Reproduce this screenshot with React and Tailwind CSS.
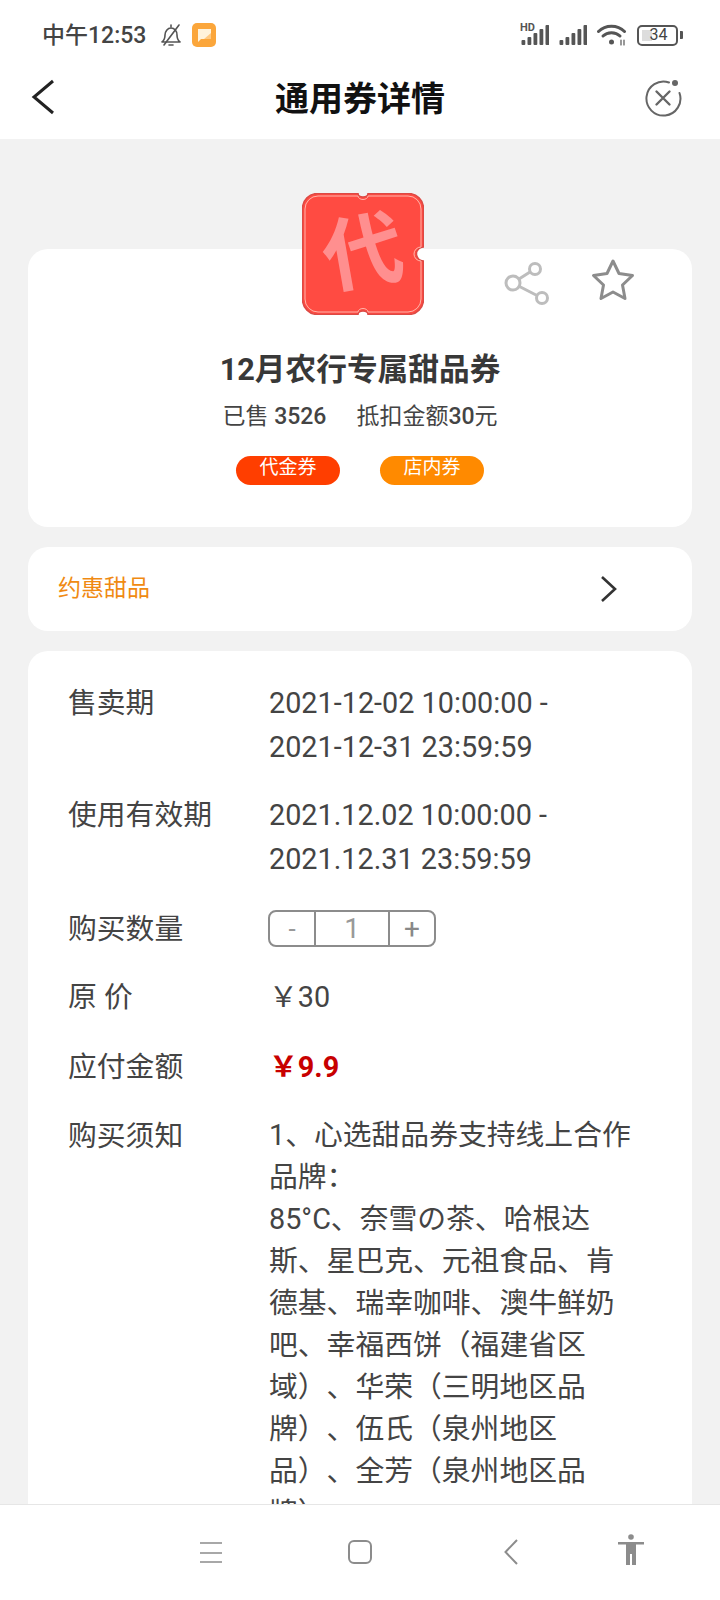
const font = { fontFamily: '"Roboto","Noto Sans CJK SC",sans-serif' };

function Signal() {
  const hs = [5, 8, 12, 16, 20];
  return (
    <svg width="28" height="20" viewBox="0 0 28 20" className="block">
      {hs.map((h, i) => (
        <rect key={i} x={i * 6 + 0.5} y={20 - h} width="3.8" height={h} rx="1" fill="#555" />
      ))}
    </svg>
  );
}

function StatusBar() {
  return (
    <div className="flex items-center h-[70px] pl-[42px] pr-[37px] bg-white text-[#444]">
      <span className="text-[23px] font-medium leading-none mr-[14px]">中午12:53</span>
      <svg width="22" height="24" viewBox="0 0 22 24" fill="none" stroke="#555" strokeWidth="1.600" strokeLinecap="round" strokeLinejoin="round">
        <path d="M2 19c2-1.500 3-3.500 3-7s2.500-7 6-7 6 3 6 7c0 3.500 1 5.500 3 7z" />
        <path d="M9 22h4" />
        <path d="M11 2v2" />
        <path d="M4 22L19 2" />
      </svg>
      <div className="ml-[10px] w-[24px] h-[24px] rounded-[5px] bg-[#fba63b] flex items-center justify-center">
        <svg width="15" height="14" viewBox="0 0 15 14">
          <path d="M1 1h13v10H4l-3 3z" fill="#fff3dc" />
          <path d="M7 11l7-6v6z" fill="#ffc982" />
        </svg>
      </div>
      <div className="ml-auto flex items-center">
        <div className="relative w-[28px] h-[20px]">
          <Signal />
          <span className="absolute left-[-1px] top-[-3px] text-[11px] leading-none font-bold text-[#555] bg-white pr-[1px]">HD</span>
        </div>
        <div className="ml-[10px]"><Signal /></div>
        <svg className="ml-[10px]" width="30" height="22" viewBox="0 0 30 22" fill="none" stroke="#555" strokeWidth="3" strokeLinecap="round">
          <path d="M1.500 7.500C8.500 .5 20.500 .5 27.500 7.500" />
          <path d="M6 12c4.500-4.500 12.500-4.500 17 0" />
          <circle cx="14.500" cy="18" r="2.500" fill="#555" stroke="none" />
          <path d="M24 16v5M27 16v5" strokeWidth="1.200" />
        </svg>
        <div className="ml-[10px] relative w-[41px] h-[21px] rounded-[5px] border-2 border-[#555] flex items-center justify-center">
          <div className="absolute left-[3px] top-[3px] bottom-[3px] w-[10px] bg-[#ddd]" />
          <span className="relative text-[16px] leading-none text-[#444] pl-[2px]">34</span>
        </div>
        <div className="ml-[2px] w-[3px] h-[8px] rounded-r-[1px] bg-[#555]" />
      </div>
    </div>
  );
}

function Header() {
  return (
    <div className="relative flex items-center justify-center h-[69px] bg-white">
      <svg className="absolute left-[30px] top-[9px]" width="26" height="36" viewBox="0 0 26 36" fill="none" stroke="#222" strokeWidth="3">
        <path d="M23 2L4 18l19 16" />
      </svg>
      <span className="text-[34px] font-bold text-[#111] leading-none -mt-[12px]">通用券详情</span>
      <svg className="absolute left-[643px] top-[7px]" width="40" height="40" viewBox="0 0 40 40" fill="none" stroke="#666" strokeWidth="2">
        <path d="M26 5.500A17 17 0 1 0 36.500 16" strokeLinecap="round" />
        <path d="M13.500 14.500l13 13M26.500 14.500l-13 13" strokeWidth="2.400" strokeLinecap="round" />
        <circle cx="32" cy="6" r="3" fill="#666" stroke="none" />
      </svg>
    </div>
  );
}

function Ticket() {
  const d = (o, r) => {
    const a = o, b = 122 - o;
    return `M${a + r} ${a}H${56}a5 3.500 0 0 0 10 0H${b - r}a${r} ${r} 0 0 1 ${r} ${r}V${54}a7 7 0 0 0 0 14V${b - r}a${r} ${r} 0 0 1 -${r} ${r}H${66}a5 3.500 0 0 0 -10 0H${a + r}a${r} ${r} 0 0 1 -${r} -${r}V${a + r}a${r} ${r} 0 0 1 ${r} -${r}z`;
  };
  return (
    <div className="relative w-[122px] h-[122px]">
      <svg className="absolute inset-0" width="122" height="122" viewBox="0 0 122 122">
        <path d={d(0.5, 15)} fill="#ff4b42" stroke="#dc4a45" strokeWidth="1.500" />
        <path d={d(3, 13)} fill="none" stroke="#ffb6ab" strokeWidth="1" />
      </svg>
      <span className="absolute inset-0 flex items-center justify-center text-[80px] font-bold leading-none text-[#ff8f8f] -rotate-[10deg]">代</span>
    </div>
  );
}

function Row({ label, children, className }) {
  return (
    <div className={`flex text-[28.800px] leading-[44px] text-[#444] ${className || ""}`}>
      <div className="w-[201px] shrink-0">{label}</div>
      <div className="flex-1">{children}</div>
    </div>
  );
}

function Stepper() {
  return (
    <div className="mt-[3px] -ml-[1px] flex w-[168px] h-[37px] rounded-[8px] border-2 border-[#8c8c8c] text-[#999] leading-none">
      <div className="w-[44px] flex items-center justify-center text-[26px]">-</div>
      <div className="w-[76px] flex items-center justify-center text-[28px] border-x-2 border-[#8c8c8c]">1</div>
      <div className="flex-1 flex items-center justify-center text-[28px] text-[#888]">+</div>
    </div>
  );
}

function BottomNav() {
  return (
    <div className="relative shrink-0 h-[96px] bg-white border-t border-[#e6e6e6]">
      <svg className="absolute left-[199px] top-[36px]" width="24" height="24" viewBox="0 0 24 24" stroke="#8c8c8c" strokeWidth="1.600">
        <path d="M1 2h22M1 12h22M1 21h22" />
      </svg>
      <svg className="absolute left-[347px] top-[34px]" width="26" height="26" viewBox="0 0 26 26" fill="none" stroke="#8c8c8c" strokeWidth="2">
        <rect x="2" y="2" width="22" height="22" rx="5" />
      </svg>
      <svg className="absolute left-[503px] top-[34px]" width="16" height="26" viewBox="0 0 16 26" fill="none" stroke="#8c8c8c" strokeWidth="2">
        <path d="M14 1L2.500 13 14 25" />
      </svg>
      <svg className="absolute left-[617px] top-[29px]" width="28" height="31" viewBox="0 0 28 31" fill="#8c8c8c">
        <circle cx="14" cy="3" r="2.800" />
        <path d="M1 8h26v2.500H19V31h-4V20h-2v11H9V10.500H1z" />
      </svg>
    </div>
  );
}

const notes = [
  "1、心选甜品券支持线上合作",
  "品牌：",
  "85°C、奈雪の茶、哈根达",
  "斯、星巴克、元祖食品、肯",
  "德基、瑞幸咖啡、澳牛鲜奶",
  "吧、幸福西饼（福建省区",
  "域）、华荣（三明地区品",
  "牌）、伍氏（泉州地区",
  "品）、全芳（泉州地区品",
  "牌）",
];

export default function App() {
  return (
    <div className="w-[720px] h-[1600px] flex flex-col overflow-hidden bg-[#f2f2f2]" style={font}>
      <StatusBar />
      <Header />
      <div className="flex-1 min-h-0 overflow-hidden px-[28px]">
        <div className="relative z-10 flex justify-center pt-[54px] -mb-[66px] pl-[6px]">
          <Ticket />
        </div>
        <div className="relative bg-white rounded-[20px] h-[278px] flex flex-col items-center">
          <svg className="absolute left-[473px] top-[10px]" width="50" height="50" viewBox="0 0 50 50" fill="none" stroke="#bdbdbd" strokeWidth="3">
            <circle cx="34" cy="10" r="5.500" />
            <circle cx="12" cy="24" r="7" />
            <circle cx="41" cy="39" r="5.500" />
            <path d="M18 20l11-7M18.500 27.500L36 36.500" />
          </svg>
          <svg className="absolute left-[562px] top-[8px]" width="46" height="46" viewBox="0 0 46 46" fill="none" stroke="#8c8c8c" strokeWidth="3" strokeLinejoin="round">
            <path d="M23 4l6 12.500 13.500 2-10 9.500 2.500 13.500L23 35l-12 6.500L13.500 28l-10-9.500 13.500-2z" />
          </svg>
          <div className="mt-[101px] text-[30.700px] leading-[40px] font-bold text-[#383838]">12月农行专属甜品券</div>
          <div className="mt-[11px] flex text-[23px] leading-[32px] text-[#444]">
            <span>已售 <span className="font-medium">3526</span></span>
            <span className="ml-[30px]">抵扣金额<span className="font-medium">30</span>元</span>
          </div>
          <div className="mt-[23px] flex gap-[40px] text-white text-[19px] leading-[24px]">
            <div className="w-[104px] h-[29px] rounded-full bg-[#ff3e00] text-center">代金券</div>
            <div className="w-[104px] h-[29px] rounded-full bg-[#ff8a00] text-center">店内券</div>
          </div>
        </div>
        <div className="mt-[20px] relative bg-white rounded-[20px] h-[84px] flex items-center pl-[30px] text-[23px] text-[#f08a12]">
          约惠甜品
          <svg className="absolute left-[571px] top-[28px]" width="20" height="28" viewBox="0 0 20 28" fill="none" stroke="#333" strokeWidth="2.600">
            <path d="M3 2l13 12L3 26" />
          </svg>
        </div>
        <div className="mt-[20px] bg-white rounded-[20px] pl-[40px] pr-[56px] pt-[30px] pb-[40px] flex flex-col">
          <Row label="售卖期" className="mb-[24px]">
            <div>2021-12-02 10:00:00 -</div>
            <div>2021-12-31 23:59:59</div>
          </Row>
          <Row label="使用有效期" className="mb-[26px]">
            <div>2021.12.02 10:00:00 -</div>
            <div>2021.12.31 23:59:59</div>
          </Row>
          <Row label="购买数量" className="mb-[24px]"><Stepper /></Row>
          <Row label="原 价" className="mb-[26px]">￥30</Row>
          <Row label="应付金额" className="mb-[25px]"><span className="font-bold text-[#c80000]">￥9.9</span></Row>
          <Row label="购买须知">
            <div className="leading-[42px] whitespace-nowrap [text-spacing-trim:space-all]">
              {notes.map((t) => (
                <div key={t}>{t}</div>
              ))}
            </div>
          </Row>
        </div>
      </div>
      <BottomNav />
    </div>
  );
}
